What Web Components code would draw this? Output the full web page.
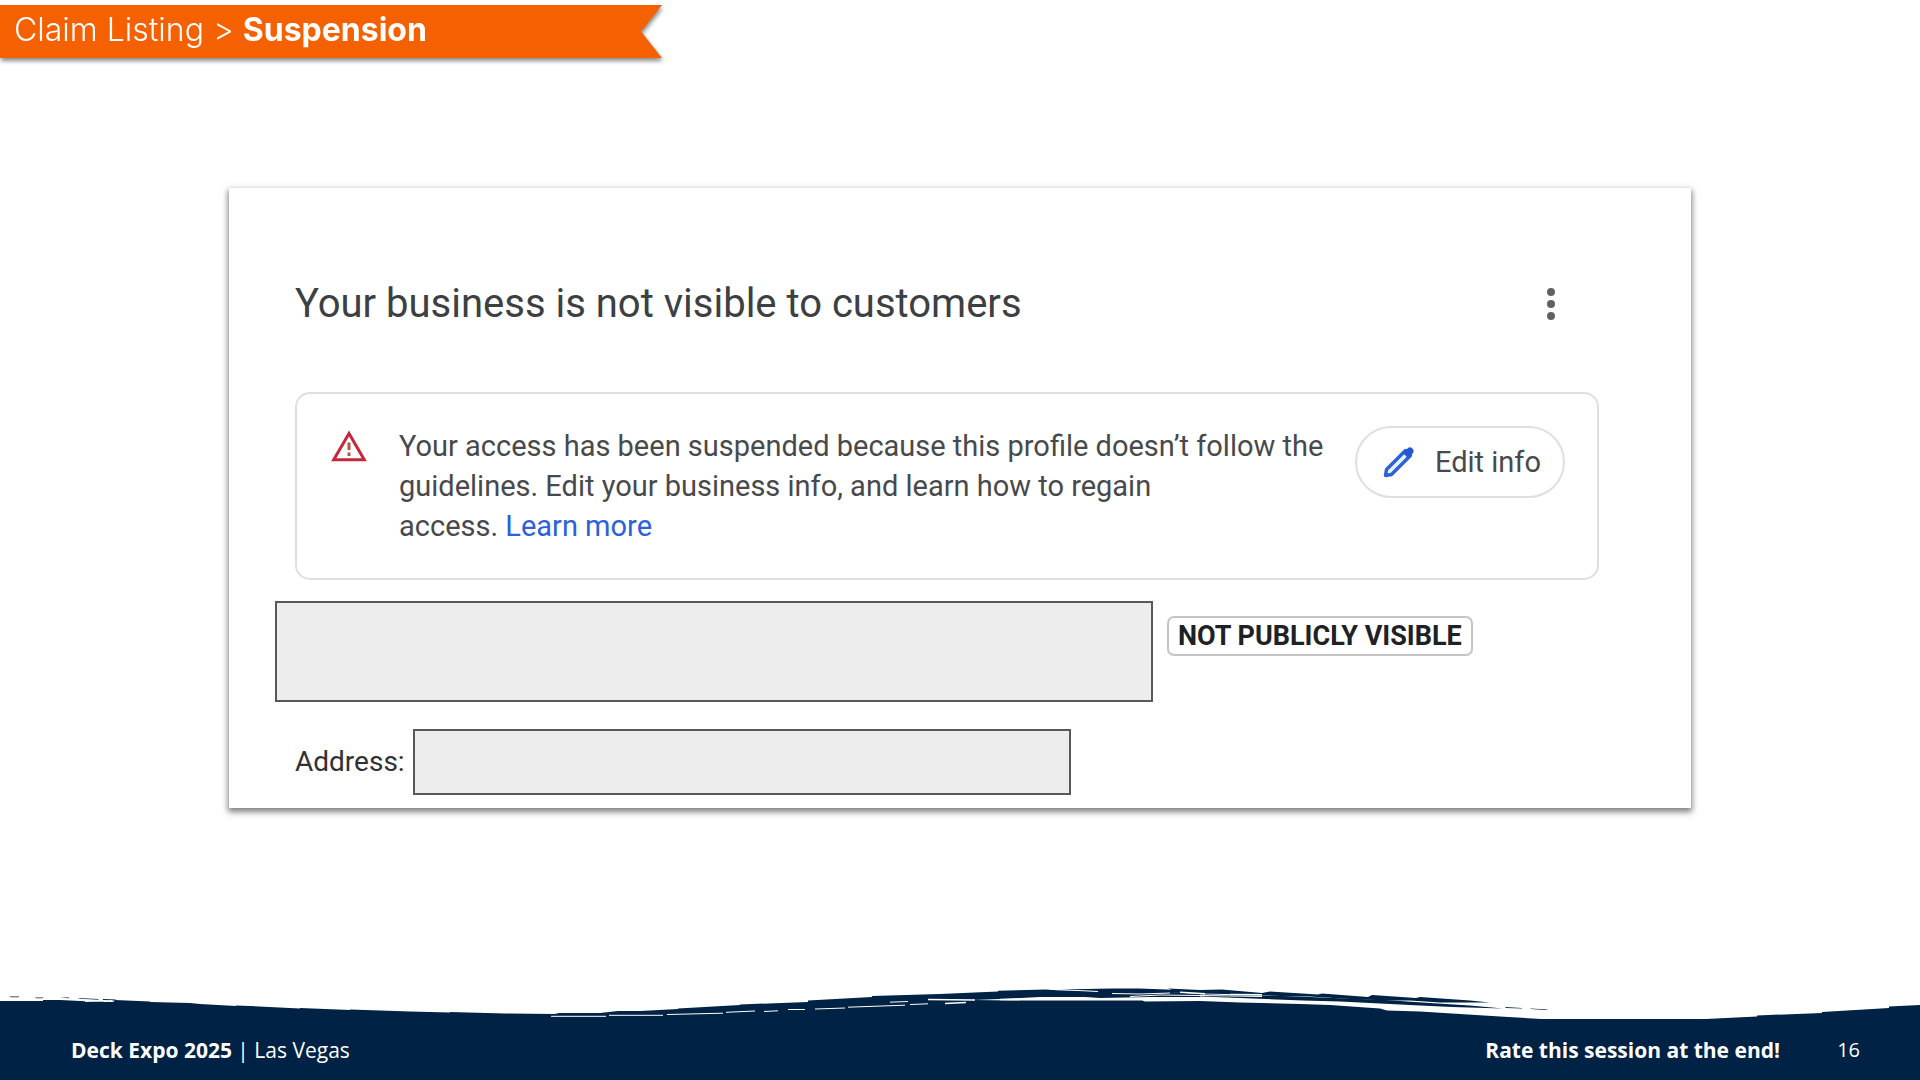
<!DOCTYPE html>
<html lang="en">
<head>
<meta charset="utf-8">
<title>Claim Listing &gt; Suspension</title>
<style>
  html, body { margin: 0; background: #fff; }
</style>
</head>
<body>
<deck-slide>
  <slide-ribbon slot="title">Claim Listing &gt; <strong>Suspension</strong></slide-ribbon>
  <profile-card>
    <span slot="heading">Your business is not visible to customers</span>
    <suspension-alert slot="alert">Your access has been suspended because this profile doesn’t follow the guidelines. Edit your business info, and learn how to regain <span slot="end">access.</span></suspension-alert>
    <status-badge slot="status">Not publicly visible</status-badge>
    <span slot="address-label">Address:</span>
  </profile-card>
  <slide-footer slot="footer">
    <span slot="event"><strong>Deck Expo 2025</strong> | Las Vegas</span>
    <strong slot="note">Rate this session at the end!</strong>
    <span slot="page">16</span>
  </slide-footer>
</deck-slide>

<script>
class Base extends HTMLElement {
  constructor() {
    super();
    this.attachShadow({ mode: 'open' }).innerHTML =
      '<style>*{box-sizing:border-box}</style>' + this.constructor.markup;
  }
}

class DeckSlide extends Base {
  static markup = `
    <style>
      :host { display: flex; flex-direction: column; min-height: 100vh; background: #fff; }
      main { flex: 1; padding: 130px 229px 0; }
    </style>
    <slot name="title"></slot>
    <main><slot></slot></main>
    <slot name="footer"></slot>`;
}

class SlideRibbon extends Base {
  static markup = `
    <style>
      :host { display: block; margin-top: 5px; filter: drop-shadow(1px 3px 2px rgba(0,0,0,.45)); }
      h1 {
        margin: 0; width: 662px; max-width: 100%; height: 53px; padding: 0 40px 3px 14px;
        background: #f56000; color: #fff;
        font: 300 32px/50px Inter, "Liberation Sans", sans-serif; white-space: nowrap;
        clip-path: polygon(0 0, 100% 0, calc(100% - 21px) 50%, 100% 100%, 0 100%);
      }
      ::slotted(strong) { font-weight: 700; }
    </style>
    <h1><slot></slot></h1>`;
}

class ProfileCard extends Base {
  static markup = `
    <style>
      :host {
        display: block; padding: 92px 92px 13px 46px; background: #fff; color: #3c4043;
        font-family: Roboto, "Liberation Sans", sans-serif;
        box-shadow: 0 3px 6px 1px rgba(0,0,0,.5);
      }
      header { display: flex; justify-content: space-between; align-items: center; padding-left: 20px; margin-bottom: 64px; }
      h2 { margin: 0; font: 400 40px/48px Roboto, "Liberation Sans", sans-serif; }
      .more { width: 48px; height: 48px; margin-right: 24px; padding: 0; border: 0; background: none; display: grid; place-items: center; }
      .alert { padding-left: 20px; margin-bottom: 21px; }
      .name-row { display: flex; align-items: flex-start; gap: 14px; margin-bottom: 27px; }
      .blank { background: #ededed; border: 2px solid #595959; }
      .name { flex: 0 1 878px; height: 101px; }
      .status { margin-top: 15px; }
      .address-row { display: flex; align-items: center; gap: 8px; padding-left: 20px; }
      .label { width: 110px; font-size: 28px; line-height: 40px; color: #303134; }
      .address { flex: 0 1 658px; height: 66px; }
    </style>
    <header>
      <h2><slot name="heading"></slot></h2>
      <button class="more" aria-label="More options">
        <svg width="10" height="34" viewBox="0 0 10 34" fill="#616161"><circle cx="5" cy="5" r="4"/><circle cx="5" cy="17" r="4"/><circle cx="5" cy="29" r="4"/></svg>
      </button>
    </header>
    <div class="alert"><slot name="alert"></slot></div>
    <div class="name-row"><div class="blank name"></div><div class="status"><slot name="status"></slot></div></div>
    <div class="address-row"><div class="label"><slot name="address-label"></slot></div><div class="blank address"></div></div>`;
}

class SuspensionAlert extends Base {
  static markup = `
    <style>
      :host { display: flex; align-items: flex-start; padding: 32px 32px 32px 34px; border: 2px solid #dfdfdf; border-radius: 15px; color: #48494c; }
      .warn { flex: none; margin: 4px 32px 0 0; }
      p { flex: 1; margin: 0 28px 0 0; font-size: 29px; line-height: 40px; }
      .end { white-space: nowrap; }
      a { color: #2b62d9; text-decoration: none; }
      button {
        flex: none; display: flex; align-items: center; gap: 20px; width: 210px; height: 72px; padding: 0 0 0 26px;
        background: #fff; border: 2px solid #dfdfdf; border-radius: 36px;
        font: 400 29px/40px Roboto, "Liberation Sans", sans-serif; color: #48494c; white-space: nowrap;
      }
    </style>
    <svg class="warn" width="36" height="32" viewBox="0 0 36 32" aria-hidden="true">
      <path d="M18 3.5 33.3 29.8H2.7Z" fill="none" stroke="#c5283a" stroke-width="3"/>
      <path d="M18 12.5v7.5M18 22.5v3.5" stroke="#b0584c" stroke-width="3"/>
    </svg>
    <p><slot></slot> <span class="end"><slot name="end"></slot> <a href="#learn">Learn more</a></span></p>
    <button>
      <svg width="32" height="32" viewBox="0 0 32 32" aria-hidden="true">
        <path d="M2.500 29.500 3.500 23.500 22.500 4.500 27.500 9.500 8.500 28.500Z" fill="#e3f4ff" stroke="#2b62d9" stroke-width="3.400" stroke-linejoin="round"/>
        <path d="M20 7 24.500 2.400Q27 .2 29.400 2.600 31.800 5 29.600 7.500L25 12Z" fill="#2457d6"/>
      </svg>
      Edit info
    </button>`;
}

class StatusBadge extends Base {
  static markup = `
    <style>
      :host {
        display: block; padding: 1px 9px; border: 2px solid #c4c4c4; border-radius: 7px;
        font-size: 27px; font-weight: 700; line-height: 34px; color: #202124; text-transform: uppercase; white-space: nowrap;
      }
    </style>
    <slot></slot>`;
}

class SlideFooter extends Base {
  static markup = `
    <style>
      :host { display: block; color: #fff; font: 400 21px/28px "Open Sans", "Noto Sans", sans-serif; }
      svg { display: block; width: 100%; height: 40px; }
      footer { display: flex; align-items: center; height: 60px; padding: 0 60px 0 71px; background: #002244; }
      .event { flex: 1; }
      .page { width: 80px; text-align: right; font-size: 20px; }
    </style>
    <svg viewBox="0 0 1920 40" preserveAspectRatio="none" aria-hidden="true">
      <g fill="#002244">
        <path d="M0 21H43V20L60 20 90 21.5 113 22 115 20 150 21.5V22L190 23 200 24 236 26V25.5L250 26 300 28.5V28L350 30V29.5L410 31.5 450 32.5V32L505 33.5 555 34 559 33 600 33 618 31 640 31 678 29V28.5L740 25V24.5L808 22V20.5L872 17V16L940 14 998 11.5V10.8L1046 9.5 1052 10 1110 10.5 1170 12 1200 14 1200 17 1150 17 1100 18 1085 17 1040 17 1000 19 973 20 1010 20.5H1087L1142 20.5 1145 21.5 1200 21 1240 22.5 1300 24 1330 25 1380 28.5 1387 30.5 1420 31.5 1460 34 1500 36.5 1541 39H1706L1757 36.5V35.5L1822 33V32L1889 28V26.5L1920 25V41H0Z"/>
        <path d="M1058 9.5 1112 8.5 1140 8.5 1172 9.7 1168 8.5 1200 10 1222 9.5 1262 13 1270 11.5 1318 14.5 1322 13.5 1368 17 1372 15 1416 18 1420 17 1470 20.5 1490 22.5 1440 22.5 1410 20.5 1390 20.5 1350 19 1310 16.5 1280 16 1250 14.5 1200 13.5 1170 12.5 1110 11.5Z"/>
        <path d="M1100 12.5 1140 14.5 1160 13 1225 15 1270 15.5 1310 17 1345 18.5 1385 20 1430 23 1470 25.5 1503 28.5 1452 27 1420 25.5 1400 24.5 1340 21.5 1303 20.5 1240 18 1200 16.5 1130 15.5Z"/>
        <path d="M1505 27 1522 28V28.5L1506 28ZM1530 28.5 1549 29.5 1545 30 1531 29Z"/>
        <path d="M9 16.5H19V17.2H11ZM35 17.5H44L42 18.3H36ZM60 17.5 70 17.5 68 18.3ZM78 18 98 19 99 19.7 80 18.8ZM103 19 116 19.5 115 20.5 103 20Z"/>
      </g>
      <g fill="none" stroke="#fff">
        <path stroke-width="1" d="M551 36.3H606M609 35.3H663M667 34.5 723 33.2M726 32.3 755 31M764 31.5 778 30.8M788 29.5H805M815 29 845 28M848 27.2 905 25.2M910 24.5 928 23.8M890 22.2 908 21.5M1055 9.7 1078 10.5 1098 11.5M1112 13.5 1140 14 1170 13M1130 16.5 1160 15 1200 15.5 1262 16.5M85 21.5 98 20.8M104 21.5 112 20.5"/>
        <path stroke-width="1.6" d="M928 19.5 975 20M945 23.5 966 22.5M1000 19.5H1020M1180 12.3 1205 13.7M1230 14.5 1262 14.7"/>
      </g>
    </svg>
    <footer>
      <div class="event"><slot name="event"></slot></div>
      <slot name="note"></slot>
      <div class="page"><slot name="page"></slot></div>
    </footer>`;
}

customElements.define('deck-slide', DeckSlide);
customElements.define('slide-ribbon', SlideRibbon);
customElements.define('profile-card', ProfileCard);
customElements.define('suspension-alert', SuspensionAlert);
customElements.define('status-badge', StatusBadge);
customElements.define('slide-footer', SlideFooter);
</script>
</body>
</html>
